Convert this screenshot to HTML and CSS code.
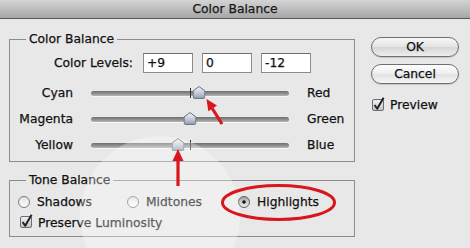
FILE: index.html
```html
<!DOCTYPE html>
<html lang="en">
<head>
<meta charset="utf-8">
<title>Color Balance</title>
<link rel="stylesheet" href="styles.css">
</head>
<body>
<svg class="defs" width="0" height="0" aria-hidden="true">
  <defs>
    <linearGradient id="thumbGrad" x1="0" y1="0" x2="0" y2="1">
      <stop offset="0" stop-color="#f1f4f8"/>
      <stop offset="0.55" stop-color="#c3cbd6"/>
      <stop offset="1" stop-color="#94a0b0"/>
    </linearGradient>
    <linearGradient id="boxGrad" x1="0" y1="0" x2="0" y2="1">
      <stop offset="0" stop-color="#f2f2f2"/>
      <stop offset="1" stop-color="#c4c4c4"/>
    </linearGradient>
    <linearGradient id="radioGrad" x1="0" y1="0" x2="0" y2="1">
      <stop offset="0" stop-color="#dedede"/>
      <stop offset="0.5" stop-color="#f1f1f1"/>
      <stop offset="1" stop-color="#fdfdfd"/>
    </linearGradient>
    <linearGradient id="radioSel" x1="0" y1="0" x2="0" y2="1">
      <stop offset="0" stop-color="#9a9a9a"/>
      <stop offset="0.5" stop-color="#cfcfcf"/>
      <stop offset="1" stop-color="#eeeeee"/>
    </linearGradient>
  </defs>
</svg>
<div class="window">
  <div class="titlebar">Color Balance</div>
  <div class="main">
    <div class="left">
      <fieldset class="group group-color">
        <legend>Color Balance</legend>
        <div class="levels">
          <span class="levels-label">Color Levels:</span>
          <span class="field">+9</span>
          <span class="field">0</span>
          <span class="field">-12</span>
        </div>
        <div class="sliders">
          <span class="s-left">Cyan</span>
          <div class="track">
            <span class="tick"></span>
            <svg class="thumb" style="left:54.5%" width="13" height="13" viewBox="0 0 13 13"><path d="M6.5 0.6 L12.4 4.8 L12.4 11 Q12.4 12.4 11 12.4 L2 12.4 Q0.6 12.4 0.6 11 L0.6 4.8 Z" fill="url(#thumbGrad)" stroke="#67707d" stroke-width="1"/></svg>
          </div>
          <span class="s-right">Red</span>

          <span class="s-left">Magenta</span>
          <div class="track">
            <span class="tick"></span>
            <svg class="thumb" style="left:50%" width="13" height="13" viewBox="0 0 13 13"><path d="M6.5 0.6 L12.4 4.8 L12.4 11 Q12.4 12.4 11 12.4 L2 12.4 Q0.6 12.4 0.6 11 L0.6 4.8 Z" fill="url(#thumbGrad)" stroke="#67707d" stroke-width="1"/></svg>
          </div>
          <span class="s-right">Green</span>

          <span class="s-left">Yellow</span>
          <div class="track">
            <span class="tick"></span>
            <svg class="thumb" style="left:44%" width="13" height="13" viewBox="0 0 13 13"><path d="M6.5 0.6 L12.4 4.8 L12.4 11 Q12.4 12.4 11 12.4 L2 12.4 Q0.6 12.4 0.6 11 L0.6 4.8 Z" fill="url(#thumbGrad)" stroke="#67707d" stroke-width="1"/></svg>
          </div>
          <span class="s-right">Blue</span>
        </div>
      </fieldset>

      <fieldset class="group group-tone">
        <legend>Tone Balance</legend>
        <div class="radios">
          <span class="radio r-shadows">
            <svg width="12" height="12" viewBox="0 0 12 12"><circle cx="6" cy="6" r="5.5" fill="url(#radioGrad)" stroke="#7a7a7a"/></svg>
            Shadows
          </span>
          <span class="radio r-midtones">
            <svg width="12" height="12" viewBox="0 0 12 12"><circle cx="6" cy="6" r="5.5" fill="url(#radioGrad)" stroke="#7a7a7a"/></svg>
            Midtones
          </span>
          <span class="radio r-highlights">
            <svg width="12" height="12" viewBox="0 0 12 12"><circle cx="6" cy="6" r="5.5" fill="url(#radioSel)" stroke="#5f5f5f"/><circle cx="6" cy="6" r="1.8" fill="#111"/></svg>
            Highlights
          </span>
        </div>
        <div class="check preserve">
          <svg width="13" height="13" viewBox="0 0 13 13"><rect x="0.5" y="0.5" width="11" height="11" rx="1.5" fill="url(#boxGrad)" stroke="#6c6c6c"/><path d="M2.6 6 L5.2 9.8 L11.6 -1.2" fill="none" stroke="#1d2230" stroke-width="2" stroke-linejoin="round"/></svg>
          Preserve Luminosity
        </div>
      </fieldset>
    </div>

    <div class="right">
      <button class="btn btn-ok">OK</button>
      <button class="btn">Cancel</button>
      <div class="check preview">
        <svg width="13" height="13" viewBox="0 0 13 13"><rect x="0.5" y="0.5" width="11" height="11" rx="1.5" fill="url(#boxGrad)" stroke="#6c6c6c"/><path d="M2.6 6 L5.2 9.8 L11.6 -1.2" fill="none" stroke="#1d2230" stroke-width="2" stroke-linejoin="round"/></svg>
        Preview
      </div>
    </div>
  </div>

  <div class="glow"></div>

  <svg class="annotations" width="470" height="248" viewBox="0 0 470 248">
    <ellipse cx="278.5" cy="202.5" rx="56" ry="17" fill="none" stroke="#d8161d" stroke-width="3"/>
    <line x1="222" y1="124" x2="212.3" y2="108.5" stroke="#d8161d" stroke-width="3.2"/>
    <polygon points="206.5,99 217,105.6 208.3,111.2" fill="#d8161d"/>
    <line x1="178" y1="186" x2="178" y2="159" stroke="#d8161d" stroke-width="3.2"/>
    <polygon points="178,149 183.5,161 172.5,161" fill="#d8161d"/>
  </svg>
</div>
</body>
</html>
```

FILE: styles.css
```css
* {
  box-sizing: border-box;
}

html,
body {
  margin: 0;
  padding: 0;
}

body {
  width: 470px;
  height: 248px;
  overflow: hidden;
  background: #e8e8e8;
  font-family: "DejaVu Sans", "Liberation Sans", sans-serif;
  font-size: 12.3px;
  color: #111;
  -webkit-text-stroke: 0.25px #111;
}

.defs {
  position: absolute;
  width: 0;
  height: 0;
}

.window {
  position: relative;
  width: 470px;
  height: 248px;
  overflow: hidden;
}

.titlebar {
  height: 19px;
  line-height: 18px;
  text-align: center;
  background: linear-gradient(#d4d4d4, #a7a7a7);
  border-bottom: 1px solid #565656;
  color: #1a1a1a;
}

.main {
  display: flex;
  padding: 12px 0 0 9px;
}

.left {
  width: 346px;
  display: flex;
  flex-direction: column;
  gap: 10px;
}

.group {
  margin: 0;
  padding: 0;
  border: 1px solid #8d8d8d;
  min-width: 0;
}

.group legend {
  margin-left: 16px;
  padding: 0 3px;
  line-height: 16px;
}

.group-color {
  padding-bottom: 3px;
}

.levels {
  display: flex;
  align-items: center;
  margin-top: 6px;
  height: 20px;
}

.levels-label {
  width: 123px;
  text-align: right;
  margin-right: 10px;
}

.field {
  width: 50px;
  height: 20px;
  margin-right: 9px;
  padding-left: 3px;
  line-height: 18px;
  background: #fff;
  border: 1px solid #8c8c8c;
  border-top-color: #6e6e6e;
}

.sliders {
  display: grid;
  grid-template-columns: 63px 198px auto;
  grid-auto-rows: 26px;
  column-gap: 18px;
  align-items: center;
  margin-top: 7px;
}

.s-left {
  text-align: right;
}

.track {
  position: relative;
  height: 5px;
  border-radius: 3px;
  background: linear-gradient(#6e6e6e, #959595 60%, #b8b8b8);
  box-shadow: 0 1px 0 rgba(255, 255, 255, 0.6);
}

.tick {
  position: absolute;
  left: 50%;
  top: -3px;
  width: 1px;
  height: 10px;
  background: #2e2e2e;
}

.thumb {
  position: absolute;
  top: -5px;
  transform: translateX(-50%);
}

.group-tone {
  padding-bottom: 4px;
}

.radios {
  display: flex;
  align-items: center;
  height: 19px;
  margin-top: 4px;
  padding-left: 8px;
}

.radio {
  display: flex;
  align-items: center;
  gap: 7px;
}

.r-shadows {
  width: 109px;
}

.r-midtones {
  width: 111px;
}

.check {
  display: flex;
  align-items: center;
  gap: 5px;
}

.check svg {
  overflow: visible;
}

.preserve {
  height: 19px;
  margin-top: 2px;
  padding-left: 10px;
}

.right {
  width: 88px;
  margin-left: 16px;
  padding-top: 6px;
  display: flex;
  flex-direction: column;
}

.btn {
  height: 20px;
  width: 88px;
  margin: 0 0 7px 0;
  padding: 0;
  font: inherit;
  color: #111;
  -webkit-text-stroke: 0.25px #111;
  border: 1px solid #6f6f6f;
  border-radius: 11px;
  background: linear-gradient(#fdfdfd, #efefef 48%, #e2e2e2 52%, #f6f6f6);
  box-shadow: 0 1px 1px rgba(0, 0, 0, 0.15);
}

.btn-ok {
  background: linear-gradient(#f6f6f6, #e4e4e4 48%, #d6d6d6 52%, #eeeeee);
}

.preview {
  height: 14px;
  margin-top: 7px;
  padding-left: 1px;
}

.glow {
  position: absolute;
  left: 80px;
  top: 136px;
  width: 160px;
  height: 160px;
  border-radius: 50%;
  background: radial-gradient(circle, rgba(255, 255, 255, 0.32) 0, rgba(255, 255, 255, 0.3) 86%, rgba(255, 255, 255, 0) 100%);
  pointer-events: none;
}

.annotations {
  position: absolute;
  left: 0;
  top: 0;
  pointer-events: none;
}
```
